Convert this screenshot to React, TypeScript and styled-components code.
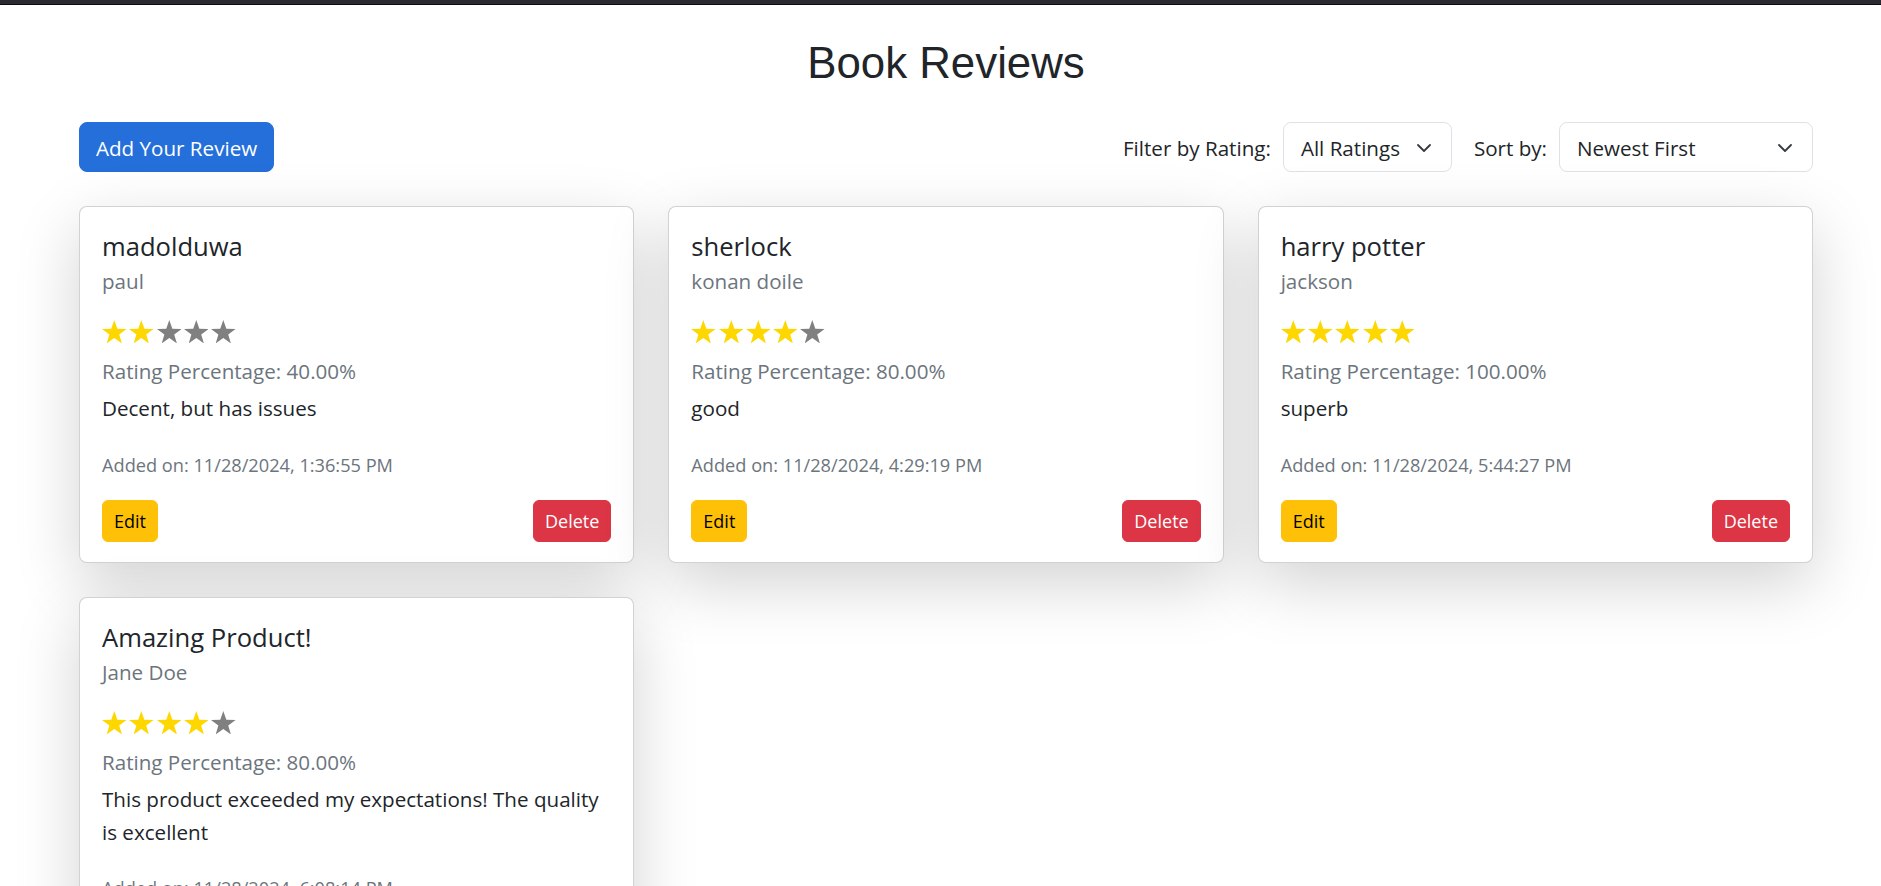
import React from "react";
import styled, { createGlobalStyle } from "styled-components";

const GlobalStyle = createGlobalStyle`
  * { box-sizing: border-box; }
  html, body { margin: 0; padding: 0; background: #ffffff; }
  body {
    font-family: "Open Sans", "Noto Sans", sans-serif;
    color: #212529;
    font-size: 20.6px;
  }
`;

const TopEdge = styled.div`
  height: 5px;
  background: #2b2a33;
  border-bottom: 1px solid #0c0c0d;
`;

const Page = styled.main`
  padding: 0 68px 60px 79px;
`;

const Title = styled.h1`
  margin: 32px 0 0;
  font-family: "Liberation Sans", Arial, sans-serif;
  font-weight: 400;
  font-size: 43.8px;
  line-height: 52px;
  text-align: center;
  color: #212529;
`;

const Toolbar = styled.div`
  margin-top: 33px;
  display: flex;
  align-items: center;
  justify-content: space-between;
  height: 50px;
`;

const PrimaryButton = styled.button`
  height: 50px;
  padding: 2px 16px 0;
  border: 1px solid #256fdb;
  border-radius: 8px;
  background: #256fdb;
  color: #ffffff;
  font-family: inherit;
  font-size: 20.6px;
  cursor: pointer;
`;

const Controls = styled.div`
  display: flex;
  align-items: center;
`;

const ControlLabel = styled.label<{ $gap: number }>`
  padding-top: 2px;
  font-size: 20.6px;
  color: #212529;
  margin-right: ${(p) => p.$gap}px;
  white-space: nowrap;
`;

const SelectBox = styled.div<{ $width: number; $after?: number }>`
  width: ${(p) => p.$width}px;
  height: 50px;
  margin-right: ${(p) => p.$after ?? 0}px;
  display: flex;
  align-items: center;
  justify-content: space-between;
  padding: 2px 19px 0 17px;
  border: 1px solid #dee2e6;
  border-radius: 8px;
  background: #ffffff;
  font-size: 20.6px;
  color: #212529;
  cursor: pointer;
`;

const Grid = styled.section`
  margin-top: 34px;
  display: grid;
  grid-template-columns: repeat(3, 1fr);
  gap: 34px;
  align-items: stretch;
`;

const Card = styled.article`
  display: flex;
  flex-direction: column;
  padding: 23px 22px 20px;
  border: 1px solid rgba(0, 0, 0, 0.175);
  border-radius: 8px;
  background: #ffffff;
  box-shadow: 0 21px 64px rgba(0, 0, 0, 0.175);
`;

const CardTitle = styled.h5`
  margin: 0;
  font-size: 25.6px;
  font-weight: 400;
  line-height: 33px;
  color: #212529;
`;

const CardSubtitle = styled.h6`
  margin: 5px 0 0;
  font-size: 20.6px;
  font-weight: 400;
  line-height: 26px;
  color: #6c757d;
`;

const StarRow = styled.div`
  margin-top: 26px;
  display: flex;
  gap: 2.7px;
  height: 23.4px;
`;

const StarIcon = styled.svg<{ $on: boolean }>`
  width: 24.6px;
  height: 23.4px;
  fill: ${(p) => (p.$on ? "#ffd700" : "#808080")};
`;

const Percentage = styled.p`
  margin: 13px 0 0;
  font-size: 20.6px;
  line-height: 30px;
  color: #6c757d;
`;

const Description = styled.p`
  margin: 6px 0 0;
  font-size: 20.6px;
  line-height: 32.3px;
  color: #212529;
`;

const AddedOn = styled.small`
  display: block;
  margin-top: 27.2px;
  font-size: 18.2px;
  line-height: 26px;
  color: #6c757d;
`;

const Actions = styled.div`
  margin-top: auto;
  padding-top: 22px;
  display: flex;
  justify-content: space-between;
`;

const SmallButton = styled.button<{ $variant: "warning" | "danger" }>`
  height: 42px;
  padding: 0 11px;
  border: 1px solid ${(p) => (p.$variant === "warning" ? "#ffc107" : "#dc3545")};
  border-radius: 6px;
  background: ${(p) => (p.$variant === "warning" ? "#ffc107" : "#dc3545")};
  color: ${(p) => (p.$variant === "warning" ? "#000000" : "#ffffff")};
  font-family: inherit;
  font-size: 18px;
  cursor: pointer;
`;

const STAR_POINTS =
  "12.3,0 15.34,8.75 24.6,8.93 17.22,14.53 19.9,23.39 12.3,18.1 4.7,23.39 7.38,14.53 0,8.93 9.26,8.75";

function Chevron() {
  return (
    <svg width="16" height="16" viewBox="0 0 16 16" fill="none" aria-hidden="true">
      <path d="m2 5 6 6 6-6" stroke="#343a40" strokeWidth="1.8" strokeLinecap="round" strokeLinejoin="round" />
    </svg>
  );
}

function Stars({ value }: { value: number }) {
  return (
    <StarRow aria-label={`${value} out of 5 stars`}>
      {[1, 2, 3, 4, 5].map((i) => (
        <StarIcon key={i} $on={i <= value} viewBox="0 0 24.6 23.4" aria-hidden="true">
          <polygon points={STAR_POINTS} />
        </StarIcon>
      ))}
    </StarRow>
  );
}

type Review = {
  title: string;
  author: string;
  rating: number;
  text: string;
  added: string;
};

const reviews: Review[] = [
  { title: "madolduwa", author: "paul", rating: 2, text: "Decent, but has issues", added: "11/28/2024, 1:36:55 PM" },
  { title: "sherlock", author: "konan doile", rating: 4, text: "good", added: "11/28/2024, 4:29:19 PM" },
  { title: "harry potter", author: "jackson", rating: 5, text: "superb", added: "11/28/2024, 5:44:27 PM" },
  {
    title: "Amazing Product!",
    author: "Jane Doe",
    rating: 4,
    text: "This product exceeded my expectations! The quality is excellent",
    added: "11/28/2024, 6:08:14 PM",
  },
];

export default function App() {
  return (
    <>
      <GlobalStyle />
      <TopEdge />
      <Page>
        <Title>Book Reviews</Title>
        <Toolbar>
          <PrimaryButton>Add Your Review</PrimaryButton>
          <Controls>
            <ControlLabel $gap={12}>Filter by Rating:</ControlLabel>
            <SelectBox $width={169} $after={22}>
              <span>All Ratings</span>
              <Chevron />
            </SelectBox>
            <ControlLabel $gap={12}>Sort by:</ControlLabel>
            <SelectBox $width={254}>
              <span>Newest First</span>
              <Chevron />
            </SelectBox>
          </Controls>
        </Toolbar>
        <Grid>
          {reviews.map((r) => (
            <Card key={r.title}>
              <CardTitle>{r.title}</CardTitle>
              <CardSubtitle>{r.author}</CardSubtitle>
              <Stars value={r.rating} />
              <Percentage>Rating Percentage: {((r.rating / 5) * 100).toFixed(2)}%</Percentage>
              <Description>{r.text}</Description>
              <AddedOn>Added on: {r.added}</AddedOn>
              <Actions>
                <SmallButton $variant="warning">Edit</SmallButton>
                <SmallButton $variant="danger">Delete</SmallButton>
              </Actions>
            </Card>
          ))}
        </Grid>
      </Page>
    </>
  );
}
